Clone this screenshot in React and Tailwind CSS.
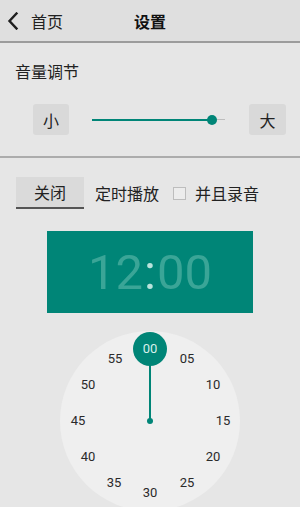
import React from "react";

const CJK = { fontFamily: '"Noto Sans CJK SC", "Noto Sans", sans-serif' };
const ROBOTO = { fontFamily: 'Roboto, "Noto Sans", sans-serif' };

const nums = [
  ["00", 150, 349],
  ["05", 187, 359],
  ["10", 213, 385],
  ["15", 223, 421],
  ["20", 213, 457],
  ["25", 187, 483],
  ["30", 150, 493],
  ["35", 114, 483],
  ["40", 88, 457],
  ["45", 78, 421],
  ["50", 88, 385],
  ["55", 115, 359],
];

function Clock() {
  const ox = 60;
  const oy = 331;
  return (
    <div className="relative mx-auto h-[180px] w-[180px] rounded-full bg-[#efefef]" style={ROBOTO}>
      <div className="absolute left-[89px] top-[18px] h-[72px] w-[2px] bg-[#008577]" />
      <div className="absolute left-[87px] top-[87px] h-[6px] w-[6px] rounded-full bg-[#008577]" />
      <div className="absolute left-[73px] top-[1px] h-[34px] w-[34px] rounded-full bg-[#008577]" />
      {nums.map(([t, x, y]) => (
        <div
          key={t}
          className={
            "absolute flex h-[20px] w-[24px] items-center justify-center text-[13px] " +
            (t === "00" ? "text-[#d8f0ec]" : "text-[#2a2a2a]")
          }
          style={{ left: x - ox - 12, top: y - oy - 10 }}
        >
          {t}
        </div>
      ))}
    </div>
  );
}

export default function App() {
  return (
    <div className="h-[507px] w-[300px] overflow-hidden bg-[#e6e6e6]" style={CJK}>
      <div className="relative flex h-[43px] items-center border-b-2 border-[#9c9c9c] bg-[#dfdfdf]">
        <svg className="absolute left-[7px] top-[12px]" width="12" height="18" viewBox="0 0 12 18">
          <polyline points="9.5,1.5 2.5,9 9.5,16.5" fill="none" stroke="#1e1e1e" strokeWidth="2.4" strokeLinecap="square" />
        </svg>
        <span className="absolute left-[31px] text-[16px] leading-[20px] text-[#222]">首页</span>
        <span className="w-full text-center text-[16px] font-bold leading-[20px] text-[#111]">设置</span>
      </div>

      <div className="border-b-2 border-[#acacac] pb-[21px] pt-[18px]">
        <div className="pl-[15px] text-[16px] leading-[20px] text-[#222]">音量调节</div>
        <div className="mt-[23px] flex items-center pl-[33px]">
          <div className="flex h-[31px] w-[36px] items-center justify-center rounded-[3px] bg-[#d9d9d9] text-[16px] text-[#222]">小</div>
          <div className="relative ml-[23px] h-[10px] w-[133px]">
            <div className="absolute left-0 top-[4px] h-[2px] w-[120px] bg-[#008577]" />
            <div className="absolute left-[120px] top-[4.5px] h-[1px] w-[13px] bg-[#bdbdbd]" />
            <div className="absolute left-[115px] top-0 h-[10px] w-[10px] rounded-full bg-[#008577]" />
          </div>
          <div className="ml-[24px] flex h-[31px] w-[37px] items-center justify-center rounded-[3px] bg-[#d9d9d9] text-[16px] text-[#222]">大</div>
        </div>
      </div>

      <div className="pt-[19px]">
        <div className="flex items-center pl-[16px]">
          <div className="flex h-[32px] w-[68px] items-center justify-center border-b-2 border-[#555] bg-[#dadada] text-[16px] text-[#222]">关闭</div>
          <span className="ml-[11px] text-[16px] text-[#222]">定时播放</span>
          <div className="ml-[14px] h-[13px] w-[13px] border border-[#bdbdbd] bg-[#ececec]" />
          <span className="ml-[9px] text-[16px] text-[#222]">并且录音</span>
        </div>
        <div className="mx-auto mt-[22px] flex h-[82px] w-[206px] items-center justify-center bg-[#008577]" style={ROBOTO}>
          <span className="text-[49px] leading-none text-[#3aa597]">12</span>
          <span className="mx-[1px] text-[49px] leading-none text-[#b9e3dc]">:</span>
          <span className="text-[49px] leading-none text-[#3aa597]">00</span>
        </div>
        <div className="mt-[18px]">
          <Clock />
        </div>
      </div>
    </div>
  );
}
